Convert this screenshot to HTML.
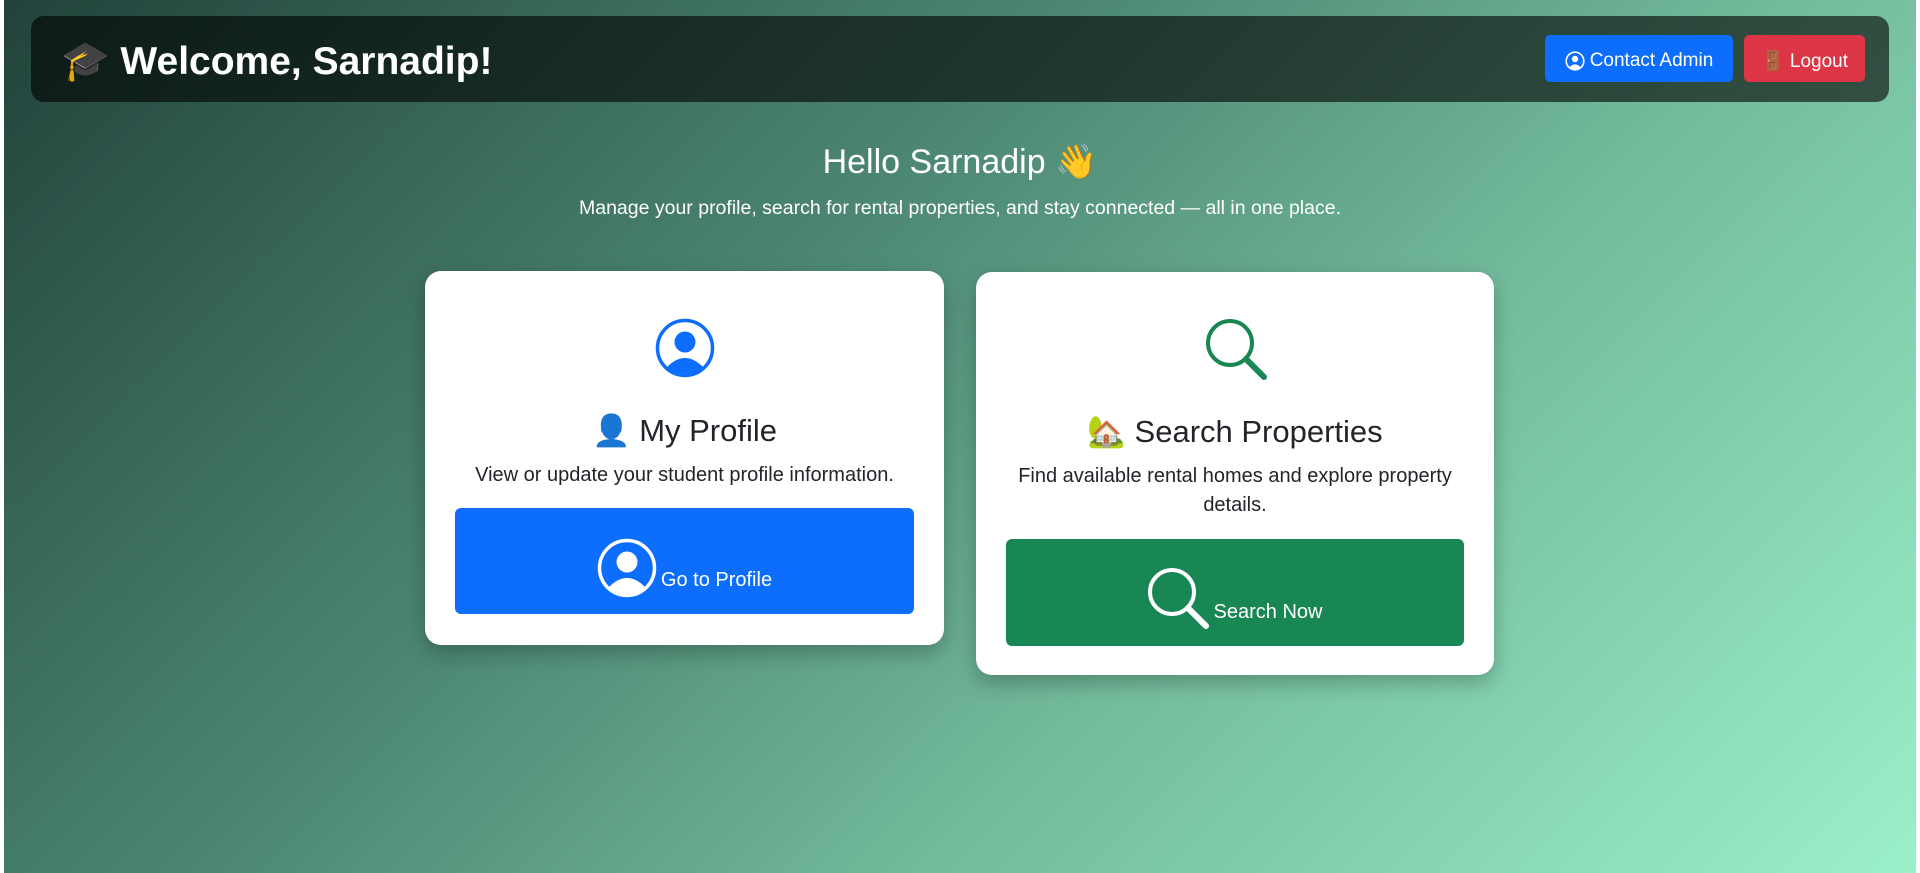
<!DOCTYPE html>
<html><head><meta charset="utf-8"><style>
*{box-sizing:border-box;margin:0;padding:0}
html,body{width:1920px;height:873px;overflow:hidden;background:#fff;font-family:"Liberation Sans","Noto Sans CJK JP",sans-serif}
.bg{position:absolute;left:4px;top:0;width:1912px;height:873px;background:linear-gradient(135deg,#21423a 0%,#4e8a75 40%,#74bc9c 65%,#9af0c9 100%)}
.nav{position:absolute;left:31px;top:16px;width:1858px;height:86px;border-radius:13px;background:rgba(0,0,0,0.6)}
.nav h1{position:absolute;left:30px;top:22px;color:#fff;font-size:39px;font-weight:bold;white-space:nowrap}
.btn{position:absolute;top:19px;height:47px;border-radius:5px;color:#fff;font-size:19px;display:flex;align-items:center;justify-content:center;gap:5px;padding-top:4px}
.hello{position:absolute;top:142px;left:0;width:1920px;text-align:center;color:#fff;font-size:34px}
.sub{position:absolute;top:197px;left:0;width:1920px;text-align:center;color:#fff;font-size:19.5px}
.card{position:absolute;background:#fff;border-radius:16px;box-shadow:0 8px 20px rgba(0,0,0,0.25);text-align:center;color:#212529}
.card .ic{position:absolute;left:0;width:100%;top:47px;display:flex;justify-content:center}
.card h2{position:absolute;left:0;width:100%;top:141px;font-size:31px;font-weight:normal}
.card p{position:absolute;left:24px;right:24px;top:190px;font-size:20px;line-height:29px}
.cb{position:absolute;left:30px;right:30px;border-radius:6px;color:#fff;font-size:20px;display:flex;justify-content:center;align-items:flex-end;padding-bottom:22px}
.cb svg{margin-right:4px;margin-bottom:-6px}
</style></head><body>
<div class="bg"></div>
<div class="nav">
<h1>🎓 Welcome, Sarnadip!</h1>
<div class="btn" style="left:1514px;width:188px;background:#0d6efd">
<svg width="20" height="20" viewBox="0 0 20 20"><circle cx="10" cy="10" r="8.8" fill="none" stroke="#fff" stroke-width="1.6"/><circle cx="10" cy="8" r="3.2" fill="#fff"/><path d="M4.3 16.2 Q10 10.5 15.7 16.2 Q10 20 4.3 16.2Z" fill="#fff"/></svg>Contact Admin</div>
<div class="btn" style="left:1713px;width:121px;background:#dc3545">🚪 Logout</div>
</div>
<div class="hello">Hello Sarnadip 👋</div>
<div class="sub">Manage your profile, search for rental properties, and stay connected — all in one place.</div>

<div class="card" style="left:425px;top:271px;width:519px;height:374px">
<div class="ic"><svg width="60" height="60" viewBox="0 0 60 60"><circle cx="30" cy="30" r="27.5" fill="none" stroke="#0d6efd" stroke-width="3.5"/><circle cx="30" cy="24" r="10.5" fill="#0d6efd"/><path d="M11 50 Q30 30 49 50 Q30 62 11 50Z" fill="#0d6efd"/></svg></div>
<h2>👤 My Profile</h2>
<p>View or update your student profile information.</p>
<div class="cb" style="top:237px;height:106px;background:#0d6efd"><svg width="60" height="60" viewBox="0 0 60 60"><circle cx="30" cy="30" r="27.5" fill="none" stroke="#fff" stroke-width="3.5"/><circle cx="30" cy="24" r="10.5" fill="#fff"/><path d="M11 50 Q30 30 49 50 Q30 62 11 50Z" fill="#fff"/></svg>Go to Profile</div>
</div>

<div class="card" style="left:976px;top:272px;width:518px;height:403px">
<div class="ic" style="left:2px"><svg width="62" height="62" viewBox="0 0 62 62"><circle cx="24" cy="24" r="22" fill="none" stroke="#198754" stroke-width="4"/><path d="M40 40 L58 58" stroke="#198754" stroke-width="6" stroke-linecap="round"/></svg></div>
<h2>🏡 Search Properties</h2>
<p>Find available rental homes and explore property details.</p>
<div class="cb" style="top:267px;height:107px;background:#198754"><svg width="62" height="62" viewBox="0 0 62 62"><circle cx="24" cy="24" r="22" fill="none" stroke="#fff" stroke-width="4"/><path d="M40 40 L58 58" stroke="#fff" stroke-width="6" stroke-linecap="round"/></svg>Search Now</div>
</div>
</body></html>
